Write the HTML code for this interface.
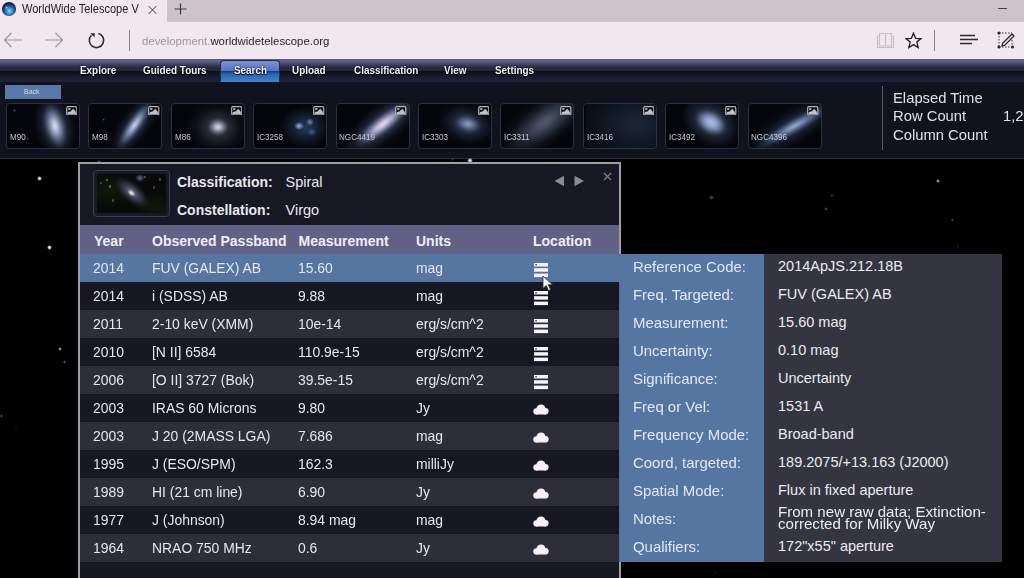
<!DOCTYPE html>
<html><head><meta charset="utf-8">
<style>
*{margin:0;padding:0;box-sizing:border-box}
html,body{width:1024px;height:578px;overflow:hidden;background:#000;font-family:"Liberation Sans",sans-serif}
.a{position:absolute}
.t{position:absolute;white-space:nowrap;line-height:1;transform-origin:0 0}
#tabbar{left:0;top:0;width:1024px;height:22px;background:#cdc4ca}
#tab{left:0;top:0;width:167px;height:22px;background:#f1e7ef}
#addr{left:0;top:22px;width:1024px;height:37px;background:#f1e7ef}
#nav{left:0;top:59px;width:1024px;height:23px;background:linear-gradient(#5c5a7a 0px,#62608a 1.5px,#5a5980 3px,#3c3c5a 6px,#2c2d42 8px,#262838 11.5px,#0d0e18 12.5px,#131522 15px,#1c1f34 19px,#1f2339 23px)}
#tool{left:0;top:82px;width:1024px;height:77px;background:#10131d;border-bottom:1px solid #2c2e3c}
#space{left:0;top:159px;width:1024px;height:419px;background:#000}
.thumb{position:absolute;top:103px;width:74px;height:45.5px;border:1px solid #2c3042;border-radius:3.5px;background:#04050a;overflow:hidden}
.thumb .lb{position:absolute;left:2.8px;top:29.1px;font-size:9px;color:#c4c8d0;line-height:1;transform:scaleX(0.9);transform-origin:0 0;white-space:nowrap}
.thumb .ic{position:absolute;right:2px;top:2px;width:11px;height:9px;border:1px solid #d0d4dc;border-radius:1px;background:#2a2e38}
#panel{left:78px;top:162px;width:543px;height:430px;border:2px solid #a09ea8;background:#171824}
.row{position:absolute;left:80px;width:539px;height:28px}
.prow{position:absolute;left:620px;width:382px;height:28px}
</style></head><body>
<div id="tabbar" class="a"></div>
<div id="tab" class="a"></div>
<div id="addr" class="a"></div>
<div id="nav" class="a"></div>
<div id="tool" class="a"></div>
<div id="space" class="a"></div>
<div class="a" style="left:2px;top:2.3px;width:13.5px;height:13.5px;border-radius:50%;filter:blur(0.3px);background:radial-gradient(circle at 4.6px 5.5px,rgba(150,210,240,.85) 0,rgba(150,210,240,0) 1.8px),radial-gradient(circle at 7.5px 9px,#80d8f8 0px,#4aaee0 2px,#2e74b0 4px,#1e4078 6px,#161e4e 8px,#141a40 10px)"></div>
<svg class="a" style="left:147px;top:5px" width="11" height="10"><path d="M1.5 1 L9.5 9 M9.5 1 L1.5 9" stroke="#404042" stroke-width="1"/></svg>
<svg class="a" style="left:174px;top:3px" width="13" height="12"><path d="M6.5 0.5 V11.5 M0.5 6 H12.5" stroke="#3a3a3c" stroke-width="1.2"/></svg>
<div class="a" style="left:998px;top:8px;width:9px;height:1px;background:#444"></div>
<div class="t" id="tabtitle" style="left:22.00px;top:2.50px;font-size:12px;color:#1c1c1e;transform:scaleX(0.9200);">WorldWide Telescope V</div>
<svg class="a" style="left:3px;top:31px" width="20" height="18"><path d="M1.5 9 H19 M8.5 2 L1.5 9 L8.5 16" stroke="#9a969a" stroke-width="1.2" fill="none"/></svg>
<svg class="a" style="left:44px;top:31px" width="20" height="18"><path d="M1 9 H18.5 M11.5 2 L18.5 9 L11.5 16" stroke="#9a969a" stroke-width="1.2" fill="none"/></svg>
<svg class="a" style="left:86px;top:31px" width="20" height="20"><path d="M12.46 2.43 A7.2 7.2 0 1 1 5.4 4.3" stroke="#2e2e30" stroke-width="1.6" fill="none"/><path d="M4.2 2.2 L8.9 2.2 L8.6 6.6 Z" fill="#2e2e30"/></svg>
<div class="a" style="left:128.5px;top:30px;width:1px;height:21px;background:#8a868a"></div>
<svg class="a" style="left:876px;top:32px" width="20" height="17"><path d="M1.5 3.5 V15.5 H17.5 V3.5 M3.5 1.5 H9.5 V14 H3.5 Z M9.5 1.5 H15.5 V14 H9.5 Z" stroke="#c6bec4" stroke-width="1.2" fill="none"/></svg>
<svg class="a" style="left:905px;top:32px" width="17" height="17"><path d="M8.5 1.2 L10.6 6.3 L16 6.6 L11.8 10 L13.2 15.6 L8.5 12.6 L3.8 15.6 L5.2 10 L1 6.6 L6.4 6.3 Z" stroke="#1e1e20" stroke-width="1.3" fill="none" stroke-linejoin="miter"/></svg>
<div class="a" style="left:933.5px;top:30px;width:1px;height:21px;background:#8a868a"></div>
<svg class="a" style="left:959px;top:33px" width="20" height="12"><path d="M1 2.5 H16 M1 6.5 H19 M1 10.5 H13" stroke="#2a2a2c" stroke-width="1.3"/></svg>
<svg class="a" style="left:997px;top:31px" width="20" height="18"><path d="M2 2 H15 M2 16 H15 M2 2 V16 M15 9 V16" stroke="#333" stroke-width="1" stroke-dasharray="1.5 1.5" fill="none"/><circle cx="2" cy="2" r="1.6" fill="#2a2a2c"/><circle cx="2" cy="16" r="1.6" fill="#2a2a2c"/><circle cx="15.5" cy="16" r="1.6" fill="#2a2a2c"/><path d="M5.5 12.5 L15 3 L17 5 L7.5 14.5 L5 15 Z" stroke="#2a2a2c" stroke-width="1.3" fill="none"/></svg>
<div class="t" id="url" style="left:142.00px;top:35.80px;font-size:11.2px;color:#9b979b;transform:scaleX(1.0180);">development.<span style="color:#262628">worldwidetelescope.org</span></div>
<div class="a" style="left:220px;top:60px;width:59.5px;height:22px;border:1.5px solid #262842;border-bottom:none;border-radius:4px 4px 0 0;background:linear-gradient(#8090d8 0px,#6a80d0 5px,#5a72c4 9.5px,#163f8c 10.5px,#2a62b0 13px,#3a86cc 20.5px)"></div>
<div class="t" id="nav0" style="left:80.00px;top:64.80px;font-size:11px;color:#f2f2f6;font-weight:bold;transform:scaleX(0.9000);text-shadow:0 0 2px #000,0 1px 1px #000;">Explore</div>
<div class="t" id="nav1" style="left:142.50px;top:64.80px;font-size:11px;color:#f2f2f6;font-weight:bold;transform:scaleX(0.9000);text-shadow:0 0 2px #000,0 1px 1px #000;">Guided Tours</div>
<div class="t" id="nav2" style="left:233.50px;top:64.80px;font-size:11px;color:#f2f2f6;font-weight:bold;transform:scaleX(0.9000);text-shadow:0 0 2px #000,0 1px 1px #000;">Search</div>
<div class="t" id="nav3" style="left:292.30px;top:64.80px;font-size:11px;color:#f2f2f6;font-weight:bold;transform:scaleX(0.9000);text-shadow:0 0 2px #000,0 1px 1px #000;">Upload</div>
<div class="t" id="nav4" style="left:354.40px;top:64.80px;font-size:11px;color:#f2f2f6;font-weight:bold;transform:scaleX(0.9000);text-shadow:0 0 2px #000,0 1px 1px #000;">Classification</div>
<div class="t" id="nav5" style="left:444.00px;top:64.80px;font-size:11px;color:#f2f2f6;font-weight:bold;transform:scaleX(0.9000);text-shadow:0 0 2px #000,0 1px 1px #000;">View</div>
<div class="t" id="nav6" style="left:494.70px;top:64.80px;font-size:11px;color:#f2f2f6;font-weight:bold;transform:scaleX(0.9000);text-shadow:0 0 2px #000,0 1px 1px #000;">Settings</div>
<div class="a" style="left:4.5px;top:84.5px;width:56px;height:14px;background:#5878a8"></div>
<div class="t" id="back" style="left:24.20px;top:87.60px;font-size:7.6px;color:#d4dcea;transform:scaleX(0.9200);">Back</div>
<div class="thumb" style="left:6.0px"><div class="a" style="left:28.0px;top:-10.0px;width:40px;height:64px;background:radial-gradient(closest-side,rgba(100,115,145,.75) 0%,rgba(60,70,98,.5) 50%,rgba(20,25,40,0) 100%);transform:rotate(-15deg);filter:blur(2px);"></div><div class="a" style="left:36.5px;top:-1.0px;width:22px;height:46px;background:radial-gradient(closest-side,rgba(235,235,252,1) 0%,rgba(195,200,230,.95) 20%,rgba(140,155,190,.8) 45%,rgba(90,105,140,.45) 75%,rgba(40,50,80,0) 100%);transform:rotate(-15deg);filter:blur(1px);"></div><div class="a" style="left:18.5px;top:32.5px;width:3px;height:3px;background:radial-gradient(closest-side,rgba(80,80,90,.8),transparent);"></div><div class="a" style="left:5.5px;top:4.5px;width:3px;height:3px;background:radial-gradient(closest-side,rgba(110,110,120,.8),transparent);"></div><svg class="a" style="right:1.7px;top:1.9px" width="11.5" height="9.5"><rect x="0.7" y="0.7" width="10.1" height="8.1" rx="1.3" fill="#0a0a0e" stroke="#b4b4bc" stroke-width="1.2"/><rect x="2.2" y="2.2" width="2.2" height="1.6" fill="#c8c8d0"/><path d="M1.6 8.1 L1.6 6.4 Q3 5.2 4.6 5.6 Q6 4 7.2 2.8 Q8.6 4 9.9 6 L9.9 8.1 Z" fill="#c0c0c8"/></svg><div class="lb">M90</div></div>
<div class="thumb" style="left:88.4px"><div class="a" style="left:30.2px;top:-17.2px;width:30px;height:76px;background:radial-gradient(closest-side,rgba(90,105,135,.7) 0%,rgba(45,55,80,.4) 60%,rgba(20,25,40,0) 100%);transform:rotate(35deg);filter:blur(1.5px);"></div><div class="a" style="left:37.7px;top:-9.2px;width:15px;height:60px;background:radial-gradient(closest-side,rgba(230,235,252,1) 0%,rgba(180,195,228,.9) 20%,rgba(120,140,180,.65) 50%,rgba(70,85,120,.3) 80%,rgba(40,50,80,0) 100%);transform:rotate(35deg);filter:blur(0.8px);"></div><div class="a" style="left:12.5px;top:13.5px;width:3px;height:3px;background:radial-gradient(closest-side,rgba(90,90,100,.8),transparent);"></div><svg class="a" style="right:1.7px;top:1.9px" width="11.5" height="9.5"><rect x="0.7" y="0.7" width="10.1" height="8.1" rx="1.3" fill="#0a0a0e" stroke="#b4b4bc" stroke-width="1.2"/><rect x="2.2" y="2.2" width="2.2" height="1.6" fill="#c8c8d0"/><path d="M1.6 8.1 L1.6 6.4 Q3 5.2 4.6 5.6 Q6 4 7.2 2.8 Q8.6 4 9.9 6 L9.9 8.1 Z" fill="#c0c0c8"/></svg><div class="lb">M98</div></div>
<div class="thumb" style="left:170.8px"><div class="a" style="left:14.7px;top:-3.8px;width:64px;height:54px;background:radial-gradient(closest-side,rgba(140,150,170,.7) 0%,rgba(80,85,105,.45) 35%,rgba(40,42,58,.25) 70%,rgba(20,20,30,0) 100%);"></div><div class="a" style="left:36.7px;top:15.2px;width:20px;height:16px;background:radial-gradient(closest-side,rgba(245,242,250,.95) 0%,rgba(215,215,232,.7) 30%,rgba(160,165,185,.3) 70%,rgba(100,100,120,0) 100%);filter:blur(1.2px);"></div><svg class="a" style="right:1.7px;top:1.9px" width="11.5" height="9.5"><rect x="0.7" y="0.7" width="10.1" height="8.1" rx="1.3" fill="#0a0a0e" stroke="#b4b4bc" stroke-width="1.2"/><rect x="2.2" y="2.2" width="2.2" height="1.6" fill="#c8c8d0"/><path d="M1.6 8.1 L1.6 6.4 Q3 5.2 4.6 5.6 Q6 4 7.2 2.8 Q8.6 4 9.9 6 L9.9 8.1 Z" fill="#c0c0c8"/></svg><div class="lb">M86</div></div>
<div class="thumb" style="left:253.2px"><div class="a" style="left:26.0px;top:2.0px;width:50px;height:42px;background:radial-gradient(closest-side,rgba(55,85,125,.7) 0%,rgba(35,55,88,.45) 55%,rgba(10,20,40,0) 100%);filter:blur(1.5px);"></div><div class="a" style="left:40.0px;top:17.5px;width:10px;height:8px;background:radial-gradient(closest-side,rgba(170,200,240,.85) 0%,rgba(80,120,170,0) 100%);filter:blur(0.6px);"></div><div class="a" style="left:52.0px;top:14.0px;width:8px;height:8px;background:radial-gradient(closest-side,rgba(130,170,220,.75) 0%,rgba(80,120,170,0) 100%);filter:blur(0.6px);"></div><div class="a" style="left:53.0px;top:24.0px;width:10px;height:8px;background:radial-gradient(closest-side,rgba(100,140,190,.55) 0%,rgba(80,120,170,0) 100%);filter:blur(0.6px);"></div><svg class="a" style="right:1.7px;top:1.9px" width="11.5" height="9.5"><rect x="0.7" y="0.7" width="10.1" height="8.1" rx="1.3" fill="#0a0a0e" stroke="#b4b4bc" stroke-width="1.2"/><rect x="2.2" y="2.2" width="2.2" height="1.6" fill="#c8c8d0"/><path d="M1.6 8.1 L1.6 6.4 Q3 5.2 4.6 5.6 Q6 4 7.2 2.8 Q8.6 4 9.9 6 L9.9 8.1 Z" fill="#c0c0c8"/></svg><div class="lb">IC3258</div></div>
<div class="thumb" style="left:335.6px"><div class="a" style="left:28.7px;top:-30.0px;width:36px;height:100px;background:radial-gradient(closest-side,rgba(110,125,160,.75) 0%,rgba(60,72,105,.45) 55%,rgba(20,25,40,0) 100%);transform:rotate(52deg);filter:blur(2px);"></div><div class="a" style="left:37.7px;top:-15.0px;width:18px;height:70px;background:radial-gradient(closest-side,rgba(245,230,245,1) 0%,rgba(210,200,228,.92) 25%,rgba(140,150,190,.65) 55%,rgba(80,95,130,.25) 85%,rgba(40,50,80,0) 100%);transform:rotate(52deg);filter:blur(0.8px);"></div><svg class="a" style="right:1.7px;top:1.9px" width="11.5" height="9.5"><rect x="0.7" y="0.7" width="10.1" height="8.1" rx="1.3" fill="#0a0a0e" stroke="#b4b4bc" stroke-width="1.2"/><rect x="2.2" y="2.2" width="2.2" height="1.6" fill="#c8c8d0"/><path d="M1.6 8.1 L1.6 6.4 Q3 5.2 4.6 5.6 Q6 4 7.2 2.8 Q8.6 4 9.9 6 L9.9 8.1 Z" fill="#c0c0c8"/></svg><div class="lb">NGC4419</div></div>
<div class="thumb" style="left:418.0px"><div class="a" style="left:20.0px;top:1.0px;width:56px;height:38px;background:radial-gradient(closest-side,rgba(90,110,150,.7) 0%,rgba(50,65,100,.45) 55%,rgba(20,25,45,0) 100%);transform:rotate(15deg);filter:blur(2px);"></div><div class="a" style="left:36.0px;top:12.0px;width:26px;height:16px;background:radial-gradient(closest-side,rgba(180,195,232,.85) 0%,rgba(125,145,195,.5) 50%,rgba(70,85,130,0) 100%);transform:rotate(15deg);filter:blur(1.5px);"></div><svg class="a" style="right:1.7px;top:1.9px" width="11.5" height="9.5"><rect x="0.7" y="0.7" width="10.1" height="8.1" rx="1.3" fill="#0a0a0e" stroke="#b4b4bc" stroke-width="1.2"/><rect x="2.2" y="2.2" width="2.2" height="1.6" fill="#c8c8d0"/><path d="M1.6 8.1 L1.6 6.4 Q3 5.2 4.6 5.6 Q6 4 7.2 2.8 Q8.6 4 9.9 6 L9.9 8.1 Z" fill="#c0c0c8"/></svg><div class="lb">IC3303</div></div>
<div class="thumb" style="left:500.4px"><div class="a" style="left:21.0px;top:-42.0px;width:46px;height:120px;background:radial-gradient(closest-side,rgba(125,140,165,.7) 0%,rgba(90,105,130,.5) 35%,rgba(45,55,72,.22) 70%,rgba(20,25,35,0) 100%);transform:rotate(55deg);filter:blur(2px);"></div><svg class="a" style="right:1.7px;top:1.9px" width="11.5" height="9.5"><rect x="0.7" y="0.7" width="10.1" height="8.1" rx="1.3" fill="#0a0a0e" stroke="#b4b4bc" stroke-width="1.2"/><rect x="2.2" y="2.2" width="2.2" height="1.6" fill="#c8c8d0"/><path d="M1.6 8.1 L1.6 6.4 Q3 5.2 4.6 5.6 Q6 4 7.2 2.8 Q8.6 4 9.9 6 L9.9 8.1 Z" fill="#c0c0c8"/></svg><div class="lb">IC3311</div></div>
<div class="thumb" style="left:582.8px"><div class="a" style="left:2.0px;top:-15.0px;width:100px;height:70px;background:radial-gradient(closest-side,rgba(42,60,82,.6) 0%,rgba(32,47,67,.5) 50%,rgba(20,30,45,.35) 100%);"></div><svg class="a" style="right:1.7px;top:1.9px" width="11.5" height="9.5"><rect x="0.7" y="0.7" width="10.1" height="8.1" rx="1.3" fill="#0a0a0e" stroke="#b4b4bc" stroke-width="1.2"/><rect x="2.2" y="2.2" width="2.2" height="1.6" fill="#c8c8d0"/><path d="M1.6 8.1 L1.6 6.4 Q3 5.2 4.6 5.6 Q6 4 7.2 2.8 Q8.6 4 9.9 6 L9.9 8.1 Z" fill="#c0c0c8"/></svg><div class="lb">IC3416</div></div>
<div class="thumb" style="left:665.2px"><div class="a" style="left:13.0px;top:-4.6px;width:64px;height:46px;background:radial-gradient(closest-side,rgba(135,155,195,.75) 0%,rgba(65,80,115,.4) 55%,rgba(20,25,45,0) 100%);transform:rotate(30deg);filter:blur(1px);"></div><div class="a" style="left:29.0px;top:7.9px;width:32px;height:21px;background:radial-gradient(closest-side,rgba(185,200,240,.95) 0%,rgba(160,180,225,.8) 40%,rgba(115,135,185,.35) 80%,rgba(80,100,150,0) 100%);transform:rotate(30deg);filter:blur(1.5px);"></div><svg class="a" style="right:1.7px;top:1.9px" width="11.5" height="9.5"><rect x="0.7" y="0.7" width="10.1" height="8.1" rx="1.3" fill="#0a0a0e" stroke="#b4b4bc" stroke-width="1.2"/><rect x="2.2" y="2.2" width="2.2" height="1.6" fill="#c8c8d0"/><path d="M1.6 8.1 L1.6 6.4 Q3 5.2 4.6 5.6 Q6 4 7.2 2.8 Q8.6 4 9.9 6 L9.9 8.1 Z" fill="#c0c0c8"/></svg><div class="lb">IC3492</div></div>
<div class="thumb" style="left:747.6px"><div class="a" style="left:28.0px;top:-33.0px;width:34px;height:110px;background:radial-gradient(closest-side,rgba(65,85,120,.65) 0%,rgba(42,58,90,.4) 55%,rgba(20,25,45,0) 100%);transform:rotate(60deg);filter:blur(2px);"></div><div class="a" style="left:38.5px;top:-23.5px;width:15px;height:90px;background:radial-gradient(closest-side,rgba(185,200,235,.9) 0%,rgba(135,155,200,.65) 35%,rgba(85,105,155,.3) 75%,rgba(60,80,120,0) 100%);transform:rotate(60deg);filter:blur(0.8px);"></div><svg class="a" style="right:1.7px;top:1.9px" width="11.5" height="9.5"><rect x="0.7" y="0.7" width="10.1" height="8.1" rx="1.3" fill="#0a0a0e" stroke="#b4b4bc" stroke-width="1.2"/><rect x="2.2" y="2.2" width="2.2" height="1.6" fill="#c8c8d0"/><path d="M1.6 8.1 L1.6 6.4 Q3 5.2 4.6 5.6 Q6 4 7.2 2.8 Q8.6 4 9.9 6 L9.9 8.1 Z" fill="#c0c0c8"/></svg><div class="lb">NGC4396</div></div>
<div class="a" style="left:881.5px;top:86px;width:1.5px;height:64px;background:#5a5e6a"></div>
<div class="t" id="el" style="left:893.00px;top:91.20px;font-size:14.5px;color:#e0e0e6;transform:scaleX(1.0200);">Elapsed Time</div>
<div class="t" id="rc" style="left:893.00px;top:109.20px;font-size:14.5px;color:#e0e0e6;transform:scaleX(1.0200);">Row Count</div>
<div class="t" id="cc" style="left:893.00px;top:127.50px;font-size:14.5px;color:#e0e0e6;transform:scaleX(1.0200);">Column Count</div>
<div class="t" id="rcv" style="left:1003.00px;top:108.70px;font-size:14.5px;color:#e0e0e6;transform:scaleX(1.0200);">1,23</div>
<div class="a" style="left:36.7px;top:175.6px;width:5.2px;height:5.2px;border-radius:50%;background:radial-gradient(closest-side,rgba(235,240,255,.95) 0%,rgba(235,240,255,.95) 35%,transparent 100%)"></div>
<div class="a" style="left:47.3px;top:244.6px;width:5.2px;height:5.2px;border-radius:50%;background:radial-gradient(closest-side,rgba(235,240,255,.95) 0%,rgba(235,240,255,.95) 35%,transparent 100%)"></div>
<div class="a" style="left:57.8px;top:346.8px;width:4px;height:4px;border-radius:50%;background:radial-gradient(closest-side,rgba(150,170,210,.8) 0%,rgba(150,170,210,.8) 35%,transparent 100%)"></div>
<div class="a" style="left:63.0px;top:360.4px;width:3.2px;height:3.2px;border-radius:50%;background:radial-gradient(closest-side,rgba(110,120,150,.6) 0%,rgba(110,120,150,.6) 35%,transparent 100%)"></div>
<div class="a" style="left:935.6px;top:178.9px;width:4px;height:4px;border-radius:50%;background:radial-gradient(closest-side,rgba(170,170,180,.85) 0%,rgba(170,170,180,.85) 35%,transparent 100%)"></div>
<div class="a" style="left:709.3px;top:195.2px;width:4.4px;height:4.4px;border-radius:50%;background:radial-gradient(closest-side,rgba(70,110,140,.6) 0%,rgba(70,110,140,.6) 35%,transparent 100%)"></div>
<div class="a" style="left:830.4px;top:193.9px;width:3.2px;height:3.2px;border-radius:50%;background:radial-gradient(closest-side,rgba(90,90,100,.6) 0%,rgba(90,90,100,.6) 35%,transparent 100%)"></div>
<div class="a" style="left:824.4px;top:207.4px;width:3.2px;height:3.2px;border-radius:50%;background:radial-gradient(closest-side,rgba(90,90,100,.6) 0%,rgba(90,90,100,.6) 35%,transparent 100%)"></div>
<div class="a" style="left:950.9px;top:218.4px;width:3.2px;height:3.2px;border-radius:50%;background:radial-gradient(closest-side,rgba(100,100,110,.6) 0%,rgba(100,100,110,.6) 35%,transparent 100%)"></div>
<div class="a" style="left:955.5px;top:244.5px;width:3.0px;height:3.0px;border-radius:50%;background:radial-gradient(closest-side,rgba(80,80,90,.5) 0%,rgba(80,80,90,.5) 35%,transparent 100%)"></div>
<div class="a" style="left:97.4px;top:159.9px;width:3.2px;height:3.2px;border-radius:50%;background:radial-gradient(closest-side,rgba(120,130,160,.6) 0%,rgba(120,130,160,.6) 35%,transparent 100%)"></div>
<div class="a" style="left:-0.1px;top:414.4px;width:3.2px;height:3.2px;border-radius:50%;background:radial-gradient(closest-side,rgba(90,110,150,.6) 0%,rgba(90,110,150,.6) 35%,transparent 100%)"></div>
<div class="a" style="left:63.6px;top:360.6px;width:2.8px;height:2.8px;border-radius:50%;background:radial-gradient(closest-side,rgba(80,90,110,.5) 0%,rgba(80,90,110,.5) 35%,transparent 100%)"></div>
<div class="a" style="left:467.4px;top:157.7px;width:5.2px;height:5.2px;border-radius:50%;background:radial-gradient(closest-side,rgba(230,235,255,.95) 0%,rgba(230,235,255,.95) 35%,transparent 100%)"></div>
<div class="a" style="left:450.9px;top:158.2px;width:3.2px;height:3.2px;border-radius:50%;background:radial-gradient(closest-side,rgba(90,95,110,.5) 0%,rgba(90,95,110,.5) 35%,transparent 100%)"></div>
<div class="a" style="left:14.8px;top:426.8px;width:2.4px;height:2.4px;border-radius:50%;background:radial-gradient(closest-side,rgba(60,70,90,.5) 0%,rgba(60,70,90,.5) 35%,transparent 100%)"></div>
<div class="a" style="left:713.7px;top:571.7px;width:2.6px;height:2.6px;border-radius:50%;background:radial-gradient(closest-side,rgba(90,90,100,.5) 0%,rgba(90,90,100,.5) 35%,transparent 100%)"></div>
<div class="a" style="left:718.8px;top:558.8px;width:2.4px;height:2.4px;border-radius:50%;background:radial-gradient(closest-side,rgba(60,60,70,.4) 0%,rgba(60,60,70,.4) 35%,transparent 100%)"></div>
<div id="panel" class="a"></div>
<div class="a" style="left:93px;top:170px;width:77px;height:47px;border:1.2px solid #3a3c52;border-radius:4px;background:#181926"></div>
<div class="a" style="left:97px;top:174.4px;width:69.2px;height:38.3px;background:radial-gradient(ellipse 40% 50% at 20% 40%,rgba(20,40,15,.5),transparent),radial-gradient(ellipse 30% 40% at 85% 85%,rgba(25,40,15,.5),transparent),#080a08;overflow:hidden">
<div class="a" style="left:14px;top:9px;width:42px;height:19px;border-radius:50%;transform:rotate(40deg);background:radial-gradient(closest-side,rgba(150,150,190,.85) 0%,rgba(110,110,150,.55) 40%,rgba(70,70,105,.3) 75%,transparent 100%);filter:blur(1.2px)"></div>
<div class="a" style="left:30px;top:15.5px;width:9px;height:6px;border-radius:50%;transform:rotate(40deg);background:radial-gradient(closest-side,#fff4e8 0%,rgba(230,210,200,.8) 40%,transparent 100%)"></div>
<div class="a" style="left:38px;top:0px;width:10px;height:8px;background:radial-gradient(closest-side,rgba(150,140,220,.7),transparent);filter:blur(.5px)"></div>
<div class="a" style="left:9px;top:4.5px;width:2.4px;height:2.4px;border-radius:50%;background:rgba(200,200,170,.6)"></div>
<div class="a" style="left:12px;top:11px;width:2.4px;height:2.4px;border-radius:50%;background:rgba(190,190,160,.5)"></div>
<div class="a" style="left:3px;top:7.5px;width:2.4px;height:2.4px;border-radius:50%;background:rgba(160,180,150,.4)"></div>
<div class="a" style="left:47px;top:1.5px;width:2.4px;height:2.4px;border-radius:50%;background:rgba(220,180,180,.5)"></div>
<div class="a" style="left:56px;top:12px;width:2.4px;height:2.4px;border-radius:50%;background:rgba(200,120,120,.4)"></div>
<div class="a" style="left:62px;top:4px;width:2.4px;height:2.4px;border-radius:50%;background:rgba(170,170,170,.4)"></div>
<div class="a" style="left:15px;top:25px;width:2.4px;height:2.4px;border-radius:50%;background:rgba(170,170,150,.4)"></div>
</div>
<svg class="a" style="left:554px;top:175px" width="32" height="12"><path d="M0.5 6 L10 0.8 V11.2 Z M20.5 0.8 L30 6 L20.5 11.2 Z" fill="#8a8a92"/></svg>
<svg class="a" style="left:603px;top:172px" width="9" height="9"><path d="M1 1 L8 8 M8 1 L1 8" stroke="#7c7c84" stroke-width="1.4"/></svg>
<div class="t" id="cls" style="left:177.00px;top:175.10px;font-size:14px;color:#e8e8ee;font-weight:bold;">Classification:</div>
<div class="t" id="clsv" style="left:285.50px;top:175.10px;font-size:14.5px;color:#e8e8ee;">Spiral</div>
<div class="t" id="con" style="left:177.00px;top:202.60px;font-size:14px;color:#e8e8ee;font-weight:bold;">Constellation:</div>
<div class="t" id="conv" style="left:285.50px;top:202.60px;font-size:14.5px;color:#e8e8ee;">Virgo</div>
<div class="row" style="top:225px;height:28.5px;background:#616186"></div>
<div class="row" style="top:253.5px;background:#5476a1"></div>
<div class="row" style="top:281.5px;background:#161722"></div>
<div class="row" style="top:309.5px;background:#2d2e39"></div>
<div class="row" style="top:337.5px;background:#161722"></div>
<div class="row" style="top:365.5px;background:#2d2e39"></div>
<div class="row" style="top:393.5px;background:#161722"></div>
<div class="row" style="top:421.5px;background:#2d2e39"></div>
<div class="row" style="top:449.5px;background:#161722"></div>
<div class="row" style="top:477.5px;background:#2d2e39"></div>
<div class="row" style="top:505.5px;background:#161722"></div>
<div class="row" style="top:533.5px;background:#2d2e39"></div>
<div class="row" style="top:561.5px;height:20px;background:#161722"></div>
<div class="a" style="left:619px;top:253.5px;width:1px;height:28px;background:#5476a1"></div>
<div class="a" style="left:619px;top:281.5px;width:1px;height:280px;background:#5c6886"></div>
<div class="a" style="left:620px;top:253.5px;width:144px;height:308px;background:#5476a1"></div>
<div class="a" style="left:764px;top:253.5px;width:238px;height:308px;background:#353541"></div>
<div class="t" id="h0" style="left:94.00px;top:233.60px;font-size:14px;color:#eeeef4;font-weight:bold;">Year</div>
<div class="t" id="h1" style="left:152.00px;top:233.60px;font-size:14px;color:#eeeef4;font-weight:bold;">Observed Passband</div>
<div class="t" id="h2" style="left:298.50px;top:233.60px;font-size:14px;color:#eeeef4;font-weight:bold;">Measurement</div>
<div class="t" id="h3" style="left:416.00px;top:233.60px;font-size:14px;color:#eeeef4;font-weight:bold;">Units</div>
<div class="t" id="h4" style="left:533.00px;top:233.60px;font-size:14px;color:#eeeef4;font-weight:bold;">Location</div>
<div class="t" id="r0c0" style="left:93.00px;top:261.00px;font-size:14.5px;color:#e6e6ec;transform:scaleX(0.9600);">2014</div>
<div class="t" id="r0c1" style="left:151.50px;top:261.00px;font-size:14.5px;color:#e6e6ec;transform:scaleX(0.9600);">FUV (GALEX) AB</div>
<div class="t" id="r0c2" style="left:297.50px;top:261.00px;font-size:14.5px;color:#e6e6ec;transform:scaleX(0.9600);">15.60</div>
<div class="t" id="r0c3" style="left:415.50px;top:261.00px;font-size:14.5px;color:#e6e6ec;transform:scaleX(0.9600);">mag</div>
<svg class="a" style="left:533.5px;top:262.8px" width="14" height="15"><rect x="0" y="0" width="14" height="3.5" fill="#f4f4f8"/><rect x="0" y="5.2" width="14" height="3.5" fill="#f4f4f8"/><rect x="0" y="10.6" width="14" height="3.5" fill="#f4f4f8"/><rect x="1.3" y="1" width="1.6" height="1.5" fill="#555"/></svg>
<div class="t" id="r1c0" style="left:93.00px;top:289.00px;font-size:14.5px;color:#e6e6ec;transform:scaleX(0.9600);">2014</div>
<div class="t" id="r1c1" style="left:151.50px;top:289.00px;font-size:14.5px;color:#e6e6ec;transform:scaleX(0.9600);">i (SDSS) AB</div>
<div class="t" id="r1c2" style="left:297.50px;top:289.00px;font-size:14.5px;color:#e6e6ec;transform:scaleX(0.9600);">9.88</div>
<div class="t" id="r1c3" style="left:415.50px;top:289.00px;font-size:14.5px;color:#e6e6ec;transform:scaleX(0.9600);">mag</div>
<svg class="a" style="left:533.5px;top:290.8px" width="14" height="15"><rect x="0" y="0" width="14" height="3.5" fill="#f4f4f8"/><rect x="0" y="5.2" width="14" height="3.5" fill="#f4f4f8"/><rect x="0" y="10.6" width="14" height="3.5" fill="#f4f4f8"/><rect x="1.3" y="1" width="1.6" height="1.5" fill="#555"/></svg>
<div class="t" id="r2c0" style="left:93.00px;top:317.00px;font-size:14.5px;color:#e6e6ec;transform:scaleX(0.9600);">2011</div>
<div class="t" id="r2c1" style="left:151.50px;top:317.00px;font-size:14.5px;color:#e6e6ec;transform:scaleX(0.9600);">2-10 keV (XMM)</div>
<div class="t" id="r2c2" style="left:297.50px;top:317.00px;font-size:14.5px;color:#e6e6ec;transform:scaleX(0.9600);">10e-14</div>
<div class="t" id="r2c3" style="left:415.50px;top:317.00px;font-size:14.5px;color:#e6e6ec;transform:scaleX(0.9600);">erg/s/cm^2</div>
<svg class="a" style="left:533.5px;top:318.8px" width="14" height="15"><rect x="0" y="0" width="14" height="3.5" fill="#f4f4f8"/><rect x="0" y="5.2" width="14" height="3.5" fill="#f4f4f8"/><rect x="0" y="10.6" width="14" height="3.5" fill="#f4f4f8"/><rect x="1.3" y="1" width="1.6" height="1.5" fill="#555"/></svg>
<div class="t" id="r3c0" style="left:93.00px;top:345.00px;font-size:14.5px;color:#e6e6ec;transform:scaleX(0.9600);">2010</div>
<div class="t" id="r3c1" style="left:151.50px;top:345.00px;font-size:14.5px;color:#e6e6ec;transform:scaleX(0.9600);">[N II] 6584</div>
<div class="t" id="r3c2" style="left:297.50px;top:345.00px;font-size:14.5px;color:#e6e6ec;transform:scaleX(0.9600);">110.9e-15</div>
<div class="t" id="r3c3" style="left:415.50px;top:345.00px;font-size:14.5px;color:#e6e6ec;transform:scaleX(0.9600);">erg/s/cm^2</div>
<svg class="a" style="left:533.5px;top:346.8px" width="14" height="15"><rect x="0" y="0" width="14" height="3.5" fill="#f4f4f8"/><rect x="0" y="5.2" width="14" height="3.5" fill="#f4f4f8"/><rect x="0" y="10.6" width="14" height="3.5" fill="#f4f4f8"/><rect x="1.3" y="1" width="1.6" height="1.5" fill="#555"/></svg>
<div class="t" id="r4c0" style="left:93.00px;top:373.00px;font-size:14.5px;color:#e6e6ec;transform:scaleX(0.9600);">2006</div>
<div class="t" id="r4c1" style="left:151.50px;top:373.00px;font-size:14.5px;color:#e6e6ec;transform:scaleX(0.9600);">[O II] 3727 (Bok)</div>
<div class="t" id="r4c2" style="left:297.50px;top:373.00px;font-size:14.5px;color:#e6e6ec;transform:scaleX(0.9600);">39.5e-15</div>
<div class="t" id="r4c3" style="left:415.50px;top:373.00px;font-size:14.5px;color:#e6e6ec;transform:scaleX(0.9600);">erg/s/cm^2</div>
<svg class="a" style="left:533.5px;top:374.8px" width="14" height="15"><rect x="0" y="0" width="14" height="3.5" fill="#f4f4f8"/><rect x="0" y="5.2" width="14" height="3.5" fill="#f4f4f8"/><rect x="0" y="10.6" width="14" height="3.5" fill="#f4f4f8"/><rect x="1.3" y="1" width="1.6" height="1.5" fill="#555"/></svg>
<div class="t" id="r5c0" style="left:93.00px;top:401.00px;font-size:14.5px;color:#e6e6ec;transform:scaleX(0.9600);">2003</div>
<div class="t" id="r5c1" style="left:151.50px;top:401.00px;font-size:14.5px;color:#e6e6ec;transform:scaleX(0.9600);">IRAS 60 Microns</div>
<div class="t" id="r5c2" style="left:297.50px;top:401.00px;font-size:14.5px;color:#e6e6ec;transform:scaleX(0.9600);">9.80</div>
<div class="t" id="r5c3" style="left:415.50px;top:401.00px;font-size:14.5px;color:#e6e6ec;transform:scaleX(0.9600);">Jy</div>
<svg class="a" style="left:532.5px;top:404px" width="16" height="11"><circle cx="8" cy="5" r="4.6" fill="#f8f0f6"/><circle cx="3.4" cy="7.4" r="3.1" fill="#f8f0f6"/><circle cx="12.4" cy="7.3" r="3.2" fill="#f8f0f6"/><rect x="3.4" y="6" width="9" height="4.5" fill="#f8f0f6"/></svg>
<div class="t" id="r6c0" style="left:93.00px;top:429.00px;font-size:14.5px;color:#e6e6ec;transform:scaleX(0.9600);">2003</div>
<div class="t" id="r6c1" style="left:151.50px;top:429.00px;font-size:14.5px;color:#e6e6ec;transform:scaleX(0.9600);">J 20 (2MASS LGA)</div>
<div class="t" id="r6c2" style="left:297.50px;top:429.00px;font-size:14.5px;color:#e6e6ec;transform:scaleX(0.9600);">7.686</div>
<div class="t" id="r6c3" style="left:415.50px;top:429.00px;font-size:14.5px;color:#e6e6ec;transform:scaleX(0.9600);">mag</div>
<svg class="a" style="left:532.5px;top:432px" width="16" height="11"><circle cx="8" cy="5" r="4.6" fill="#f8f0f6"/><circle cx="3.4" cy="7.4" r="3.1" fill="#f8f0f6"/><circle cx="12.4" cy="7.3" r="3.2" fill="#f8f0f6"/><rect x="3.4" y="6" width="9" height="4.5" fill="#f8f0f6"/></svg>
<div class="t" id="r7c0" style="left:93.00px;top:457.00px;font-size:14.5px;color:#e6e6ec;transform:scaleX(0.9600);">1995</div>
<div class="t" id="r7c1" style="left:151.50px;top:457.00px;font-size:14.5px;color:#e6e6ec;transform:scaleX(0.9600);">J (ESO/SPM)</div>
<div class="t" id="r7c2" style="left:297.50px;top:457.00px;font-size:14.5px;color:#e6e6ec;transform:scaleX(0.9600);">162.3</div>
<div class="t" id="r7c3" style="left:415.50px;top:457.00px;font-size:14.5px;color:#e6e6ec;transform:scaleX(0.9600);">milliJy</div>
<svg class="a" style="left:532.5px;top:460px" width="16" height="11"><circle cx="8" cy="5" r="4.6" fill="#f8f0f6"/><circle cx="3.4" cy="7.4" r="3.1" fill="#f8f0f6"/><circle cx="12.4" cy="7.3" r="3.2" fill="#f8f0f6"/><rect x="3.4" y="6" width="9" height="4.5" fill="#f8f0f6"/></svg>
<div class="t" id="r8c0" style="left:93.00px;top:485.00px;font-size:14.5px;color:#e6e6ec;transform:scaleX(0.9600);">1989</div>
<div class="t" id="r8c1" style="left:151.50px;top:485.00px;font-size:14.5px;color:#e6e6ec;transform:scaleX(0.9600);">HI (21 cm line)</div>
<div class="t" id="r8c2" style="left:297.50px;top:485.00px;font-size:14.5px;color:#e6e6ec;transform:scaleX(0.9600);">6.90</div>
<div class="t" id="r8c3" style="left:415.50px;top:485.00px;font-size:14.5px;color:#e6e6ec;transform:scaleX(0.9600);">Jy</div>
<svg class="a" style="left:532.5px;top:488px" width="16" height="11"><circle cx="8" cy="5" r="4.6" fill="#f8f0f6"/><circle cx="3.4" cy="7.4" r="3.1" fill="#f8f0f6"/><circle cx="12.4" cy="7.3" r="3.2" fill="#f8f0f6"/><rect x="3.4" y="6" width="9" height="4.5" fill="#f8f0f6"/></svg>
<div class="t" id="r9c0" style="left:93.00px;top:513.00px;font-size:14.5px;color:#e6e6ec;transform:scaleX(0.9600);">1977</div>
<div class="t" id="r9c1" style="left:151.50px;top:513.00px;font-size:14.5px;color:#e6e6ec;transform:scaleX(0.9600);">J (Johnson)</div>
<div class="t" id="r9c2" style="left:297.50px;top:513.00px;font-size:14.5px;color:#e6e6ec;transform:scaleX(0.9600);">8.94 mag</div>
<div class="t" id="r9c3" style="left:415.50px;top:513.00px;font-size:14.5px;color:#e6e6ec;transform:scaleX(0.9600);">mag</div>
<svg class="a" style="left:532.5px;top:516px" width="16" height="11"><circle cx="8" cy="5" r="4.6" fill="#f8f0f6"/><circle cx="3.4" cy="7.4" r="3.1" fill="#f8f0f6"/><circle cx="12.4" cy="7.3" r="3.2" fill="#f8f0f6"/><rect x="3.4" y="6" width="9" height="4.5" fill="#f8f0f6"/></svg>
<div class="t" id="r10c0" style="left:93.00px;top:541.00px;font-size:14.5px;color:#e6e6ec;transform:scaleX(0.9600);">1964</div>
<div class="t" id="r10c1" style="left:151.50px;top:541.00px;font-size:14.5px;color:#e6e6ec;transform:scaleX(0.9600);">NRAO 750 MHz</div>
<div class="t" id="r10c2" style="left:297.50px;top:541.00px;font-size:14.5px;color:#e6e6ec;transform:scaleX(0.9600);">0.6</div>
<div class="t" id="r10c3" style="left:415.50px;top:541.00px;font-size:14.5px;color:#e6e6ec;transform:scaleX(0.9600);">Jy</div>
<svg class="a" style="left:532.5px;top:544px" width="16" height="11"><circle cx="8" cy="5" r="4.6" fill="#f8f0f6"/><circle cx="3.4" cy="7.4" r="3.1" fill="#f8f0f6"/><circle cx="12.4" cy="7.3" r="3.2" fill="#f8f0f6"/><rect x="3.4" y="6" width="9" height="4.5" fill="#f8f0f6"/></svg>
<div class="t" id="p0l" style="left:633.40px;top:259.60px;font-size:14.5px;color:#e2e8f2;transform:scaleX(1.0300);">Reference Code:</div>
<div class="t" id="p0v" style="left:778.00px;top:258.90px;font-size:14.5px;color:#ebebf0;">2014ApJS.212.18B</div>
<div class="t" id="p1l" style="left:633.40px;top:287.60px;font-size:14.5px;color:#e2e8f2;transform:scaleX(1.0300);">Freq. Targeted:</div>
<div class="t" id="p1v" style="left:778.00px;top:286.90px;font-size:14.5px;color:#ebebf0;">FUV (GALEX) AB</div>
<div class="t" id="p2l" style="left:633.40px;top:315.60px;font-size:14.5px;color:#e2e8f2;transform:scaleX(1.0300);">Measurement:</div>
<div class="t" id="p2v" style="left:778.00px;top:314.90px;font-size:14.5px;color:#ebebf0;">15.60 mag</div>
<div class="t" id="p3l" style="left:633.40px;top:343.60px;font-size:14.5px;color:#e2e8f2;transform:scaleX(1.0300);">Uncertainty:</div>
<div class="t" id="p3v" style="left:778.00px;top:342.90px;font-size:14.5px;color:#ebebf0;">0.10 mag</div>
<div class="t" id="p4l" style="left:633.40px;top:371.60px;font-size:14.5px;color:#e2e8f2;transform:scaleX(1.0300);">Significance:</div>
<div class="t" id="p4v" style="left:778.00px;top:370.90px;font-size:14.5px;color:#ebebf0;">Uncertainty</div>
<div class="t" id="p5l" style="left:633.40px;top:399.60px;font-size:14.5px;color:#e2e8f2;transform:scaleX(1.0300);">Freq or Vel:</div>
<div class="t" id="p5v" style="left:778.00px;top:398.90px;font-size:14.5px;color:#ebebf0;">1531 A</div>
<div class="t" id="p6l" style="left:633.40px;top:427.60px;font-size:14.5px;color:#e2e8f2;transform:scaleX(1.0300);">Frequency Mode:</div>
<div class="t" id="p6v" style="left:778.00px;top:426.90px;font-size:14.5px;color:#ebebf0;">Broad-band</div>
<div class="t" id="p7l" style="left:633.40px;top:455.60px;font-size:14.5px;color:#e2e8f2;transform:scaleX(1.0300);">Coord, targeted:</div>
<div class="t" id="p7v" style="left:778.00px;top:454.90px;font-size:14.5px;color:#ebebf0;">189.2075/+13.163 (J2000)</div>
<div class="t" id="p8l" style="left:633.40px;top:483.60px;font-size:14.5px;color:#e2e8f2;transform:scaleX(1.0300);">Spatial Mode:</div>
<div class="t" id="p8v" style="left:778.00px;top:482.90px;font-size:14.5px;color:#ebebf0;">Flux in fixed aperture</div>
<div class="t" id="p9l" style="left:633.40px;top:511.60px;font-size:14.5px;color:#e2e8f2;transform:scaleX(1.0300);">Notes:</div>
<div class="t" id="p9v" style="left:778.00px;top:507.10px;font-size:14.5px;color:#ebebf0;transform:scaleX(1.0400);line-height:11.7px;">From new raw data; Extinction-<br>corrected for Milky Way</div>
<div class="t" id="p10l" style="left:633.40px;top:539.60px;font-size:14.5px;color:#e2e8f2;transform:scaleX(1.0300);">Qualifiers:</div>
<div class="t" id="p10v" style="left:778.00px;top:538.90px;font-size:14.5px;color:#ebebf0;">172&quot;x55&quot; aperture</div>
<svg class="a" style="left:541.5px;top:274.5px" width="13" height="17"><path d="M1 1 L1 13.5 L4.2 10.6 L6.6 15.6 L8.6 14.7 L6.3 9.8 L10.6 9.8 Z" fill="#fff" stroke="#333" stroke-width="0.9" stroke-linejoin="round"/></svg>
</body></html>
